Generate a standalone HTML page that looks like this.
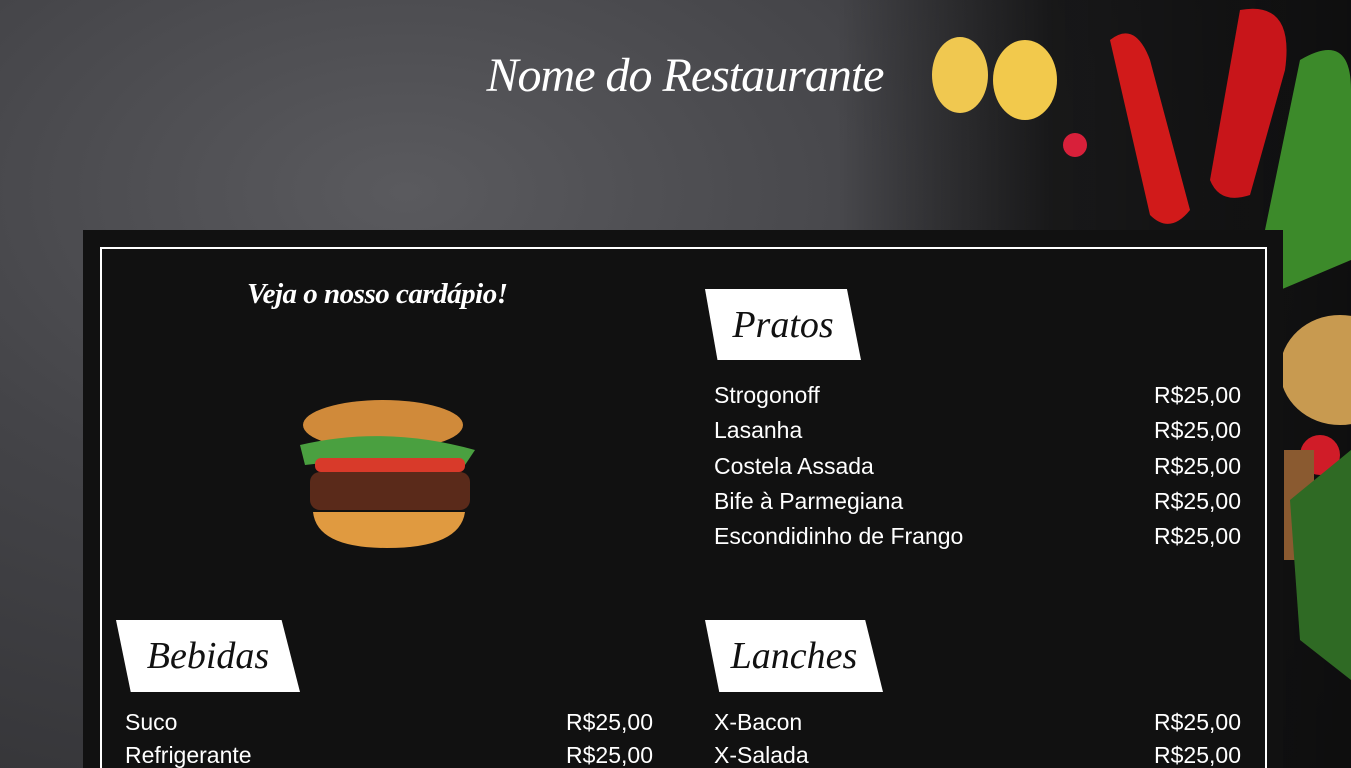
<!DOCTYPE html>
<html><head><meta charset="utf-8"><style>
*{margin:0;padding:0;box-sizing:border-box}
html,body{width:1351px;height:768px;overflow:hidden}
body{position:relative;font-family:"Liberation Sans",sans-serif;
background:linear-gradient(90deg,rgba(0,0,0,0) 0%,rgba(0,0,0,0) 62%,rgba(10,10,10,0.75) 78%,rgba(10,10,10,0.9) 100%),radial-gradient(ellipse at 30% 25%,#5a5a5e 0%,#444448 40%,#2e2e31 100%);}
.veg{position:absolute}
h1{position:absolute;left:440px;top:48px;width:490px;text-align:center;color:#fff;font:italic 48px "Liberation Serif",serif;letter-spacing:-1px}
.panel{position:absolute;left:83px;top:230px;width:1200px;height:538px;background:#111;overflow:hidden}
.border{position:absolute;left:17px;top:17px;width:1167px;height:560px;border:2px solid #fff;border-bottom:none}
.sub{position:absolute;left:247px;top:278px;color:#fff;font:italic bold 29px "Liberation Serif",serif;letter-spacing:-0.5px}
.tag{position:absolute;background:#fff;color:#111;font:italic 38px "Liberation Serif",serif;display:flex;align-items:center;justify-content:center}
.row{position:absolute;color:#fff;font-size:23px;display:flex;justify-content:space-between}
</style></head><body>
<svg class="veg" style="left:900px;top:0" width="451" height="768">
<ellipse cx="60" cy="75" rx="28" ry="38" fill="#f0c850"/>
<ellipse cx="125" cy="80" rx="32" ry="40" fill="#f2c94c"/>
<path d="M210 40 Q235 20 250 60 L290 210 Q270 235 250 215 Z" fill="#d11a1a"/>
<path d="M340 10 Q395 0 385 70 L350 195 Q320 205 310 180 Z" fill="#c8151a"/>
<path d="M400 60 Q451 30 451 90 L451 260 L380 290 Q350 270 365 230 Z" fill="#3c8a2a"/>
<circle cx="175" cy="145" r="12" fill="#d8203a"/>
<ellipse cx="440" cy="370" rx="60" ry="55" fill="#c89a50"/>
<circle cx="420" cy="455" r="20" fill="#d01c28"/>
<rect x="384" y="450" width="30" height="110" fill="#8a5a30"/>
<path d="M390 500 L451 450 L451 680 L400 640 Z" fill="#2f6a24"/>
</svg>
<h1>Nome do Restaurante</h1>
<div class="panel"><div class="border"></div></div>
<div class="sub">Veja o nosso cardápio!</div>
<svg class="veg" style="left:295px;top:400px" width="182" height="150">
<ellipse cx="88" cy="25" rx="80" ry="25" fill="#d08a3a"/>
<path d="M5 45 Q90 25 180 50 L170 65 Q90 55 10 65Z" fill="#4aa040"/>
<rect x="20" y="58" width="150" height="14" rx="6" fill="#d83a2a"/>
<rect x="15" y="72" width="160" height="38" rx="10" fill="#5a2a1a"/>
<path d="M18 112 L170 112 Q165 148 92 148 Q22 148 18 112Z" fill="#e09a40"/>
</svg>
<div class="tag" style="left:705px;top:289px;width:156px;height:71px;clip-path:polygon(0 0,91% 0,100% 100%,8% 100%)">Pratos</div>
<div class="tag" style="left:116px;top:620px;width:184px;height:72px;clip-path:polygon(0 0,90% 0,100% 100%,8% 100%)">Bebidas</div>
<div class="tag" style="left:705px;top:620px;width:178px;height:72px;clip-path:polygon(0 0,90% 0,100% 100%,8% 100%)">Lanches</div>
<div class="row" style="left:714px;top:382px;width:527px"><span>Strogonoff</span><span>R$25,00</span></div>
<div class="row" style="left:714px;top:417px;width:527px"><span>Lasanha</span><span>R$25,00</span></div>
<div class="row" style="left:714px;top:453px;width:527px"><span>Costela Assada</span><span>R$25,00</span></div>
<div class="row" style="left:714px;top:488px;width:527px"><span>Bife à Parmegiana</span><span>R$25,00</span></div>
<div class="row" style="left:714px;top:523px;width:527px"><span>Escondidinho de Frango</span><span>R$25,00</span></div>
<div class="row" style="left:125px;top:709px;width:528px"><span>Suco</span><span>R$25,00</span></div>
<div class="row" style="left:125px;top:742px;width:528px"><span>Refrigerante</span><span>R$25,00</span></div>
<div class="row" style="left:714px;top:709px;width:527px"><span>X-Bacon</span><span>R$25,00</span></div>
<div class="row" style="left:714px;top:742px;width:527px"><span>X-Salada</span><span>R$25,00</span></div>
</body></html>
